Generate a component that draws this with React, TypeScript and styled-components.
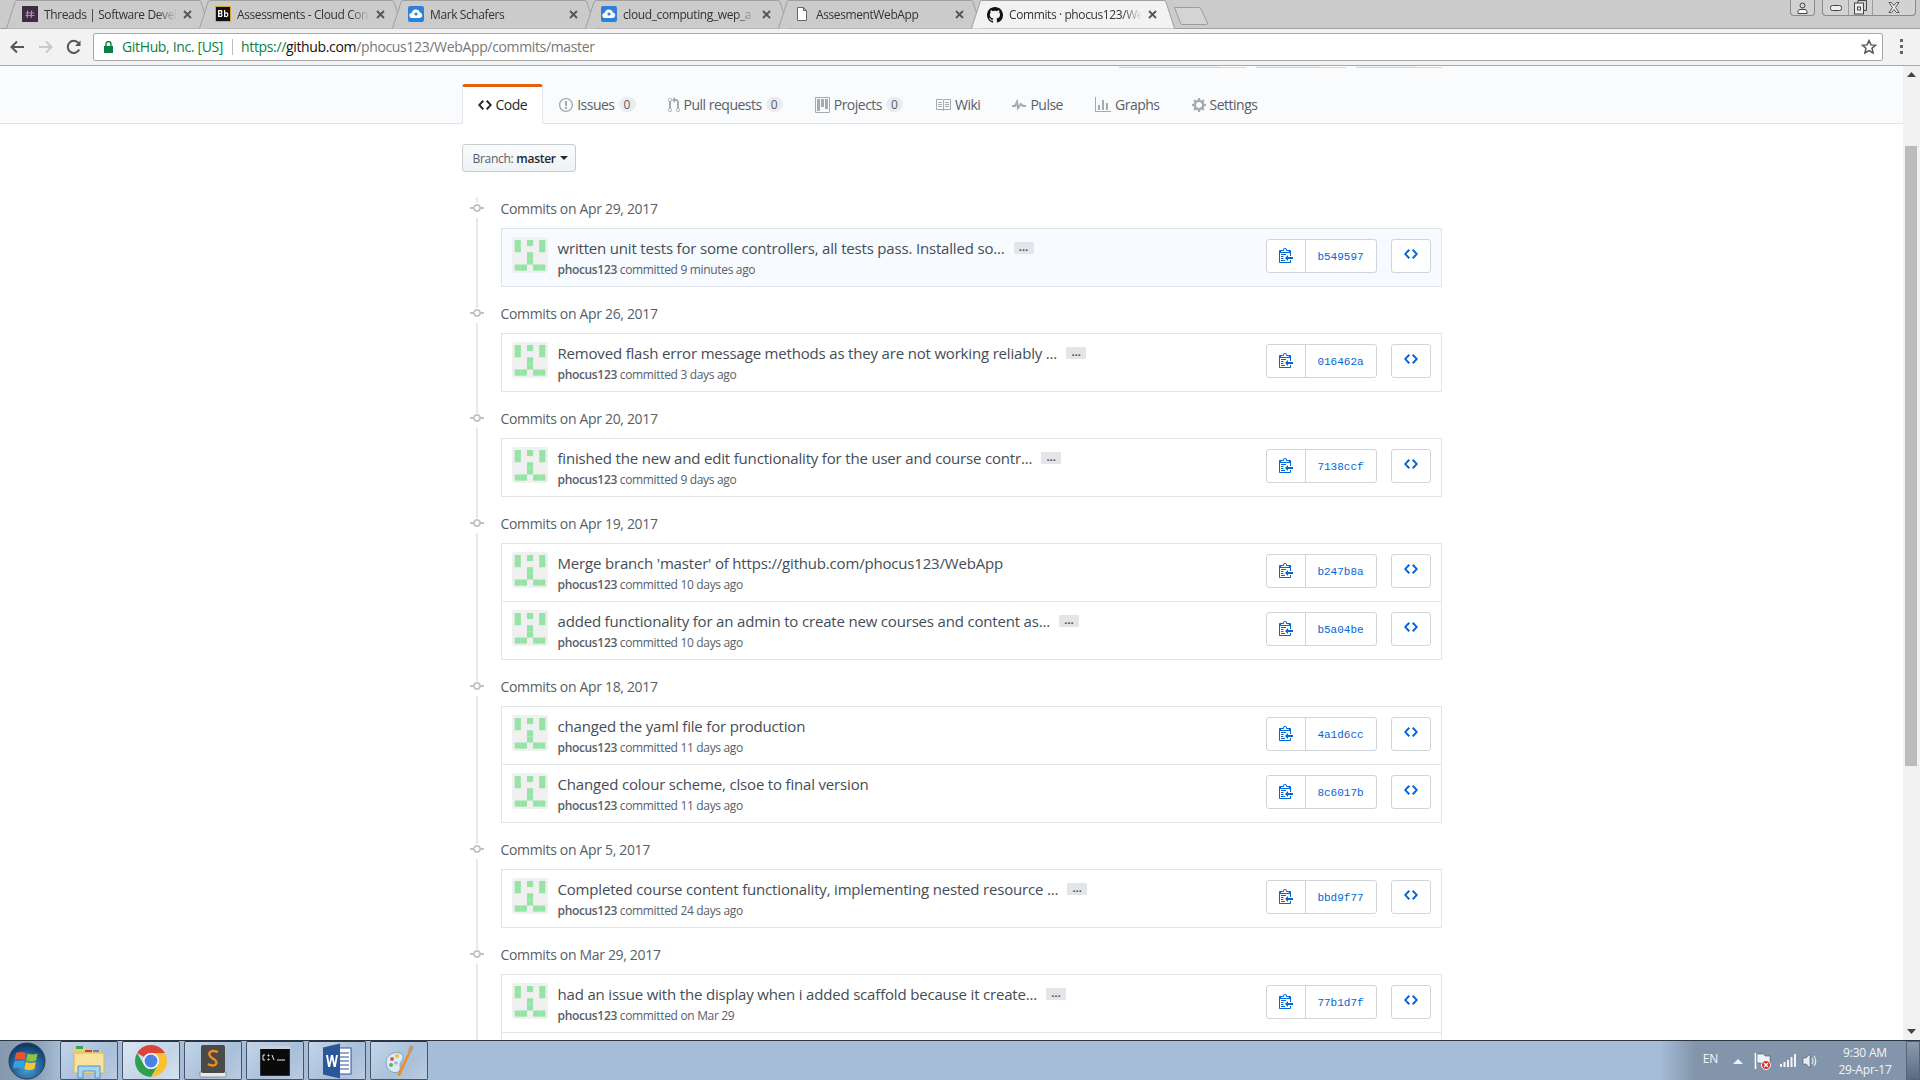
import React from 'react';
import styled, { createGlobalStyle } from 'styled-components';

const FONT = '"Open Sans", "Noto Sans", "Liberation Sans", sans-serif';

const Global = createGlobalStyle`
  html, body { margin: 0; padding: 0; background: #fff; overflow: hidden; }
  * { box-sizing: border-box; }
  body { font-family: ${FONT}; }
`;

const Screen = styled.div`
  width: 1920px; height: 1080px; display: flex; flex-direction: column; overflow: hidden; background: #fff;
`;

/* ---------- Browser chrome ---------- */
const TabStrip = styled.div`
  height: 29px; flex: none; display: flex; align-items: flex-start; padding-left: 6px;
  background: #cbcbcb; border-bottom: 1px solid #a0a0a0; position: relative;
`;
const Tab = styled.div<{ $active?: boolean }>`
  position: relative; width: 204px; height: ${p => (p.$active ? 29 : 28)}px; flex: none; margin-right: -11px;
  display: flex; align-items: center; padding: 0 16px 0 16px; z-index: ${p => (p.$active ? 2 : 1)};
  font-size: 12px; color: #333; letter-spacing: -0.4px;
`;
const TabShape = styled.svg`
  position: absolute; left: 0; top: 0; width: 204px; height: 29px;
`;
const TabIcon = styled.div`
  position: relative; width: 16px; height: 16px; flex: none; display: flex; margin-right: 6px;
`;
const TabTitle = styled.span`
  position: relative; flex: 1; overflow: hidden; white-space: nowrap;
  -webkit-mask-image: linear-gradient(to right, #000 85%, transparent 100%);
  mask-image: linear-gradient(to right, #000 85%, transparent 100%);
`;
const TabClose = styled.svg`
  position: relative; width: 9px; height: 9px; flex: none; margin: 0 2px 0 6px;
`;
const NewTab = styled.svg`
  width: 35px; height: 18px; flex: none; margin: 7px 0 0 10px; position: relative; z-index: 0;
`;
const WinGroup = styled.div`
  position: absolute; top: 0; right: 4px; display: flex; gap: 7px;
`;
const WinBox = styled.div`
  height: 16px; display: flex; border: 1px solid #8a8a8a; border-top: none; border-radius: 0 0 4px 4px; background: #d2d2d2;
`;
const WinBtn = styled.div<{ $w: number }>`
  width: ${p => p.$w}px; display: flex; align-items: center; justify-content: center;
  & + & { border-left: 1px solid #9c9c9c; }
`;

const Toolbar = styled.div`
  height: 37px; flex: none; display: flex; align-items: center; background: #f2f2f2; border-bottom: 1px solid #a8a8a8;
  padding-bottom: 1px;
`;
const NavButton = styled.div<{ $w: number }>`
  width: ${p => p.$w}px; display: flex; justify-content: center; flex: none;
`;
const AddressBar = styled.div`
  width: 1790px; height: 28px; margin-left: 5px; flex: none; display: flex; align-items: center; background: #fff;
  border: 1px solid #a9a9a9; border-radius: 2px; padding: 0 5px 0 10px; font-size: 14px; letter-spacing: -0.35px;
`;
const SiteName = styled.span` color: #0b8043; margin-left: 9px; `;
const Separator = styled.span` width: 1px; height: 16px; background: #bbb; margin: 0 8px 0 9px; `;
const UrlText = styled.span` color: #777; flex: 1; `;
const UrlGreen = styled.span` color: #0b8043; `;
const UrlHost = styled.span` color: #111; `;
const MenuDots = styled.div`
  flex: 1; display: flex; flex-direction: column; align-items: center; gap: 3px;
`;
const Dot = styled.span` width: 3px; height: 3px; background: #666; `;

/* ---------- Page ---------- */
const Viewport = styled.div`
  flex: 1; min-height: 0; display: flex; overflow: hidden;
`;
const Page = styled.div` flex: 1; min-width: 0; overflow: hidden; `;
const Scrollbar = styled.div`
  width: 17px; flex: none; background: #f1f1f1; display: flex; flex-direction: column; align-items: flex-start;
`;
const ScrollArrow = styled.div`
  width: 100%; height: 17px; flex: none; display: flex; align-items: center; justify-content: center;
`;
const ScrollThumb = styled.div`
  width: 12px; height: 620px; margin: 63px 0 0 2px; background: #bcbcbc;
`;
const ScrollSpacer = styled.div` flex: 1; `;

const PageHead = styled.div`
  height: 58px; background: #fafbfc; border-bottom: 1px solid #e1e4e8;
`;
const Container = styled.div`
  width: 980px; margin: 0 auto;
`;
const StubRow = styled.div`
  display: flex; justify-content: flex-end; gap: 10px; height: 2px;
`;
const Stub = styled.div` display: flex; `;
const StubPart = styled.div<{ $w: number; $light?: boolean }>`
  width: ${p => p.$w}px; height: 2px; background: ${p => (p.$light ? '#fff' : '#eff3f6')};
  border-bottom: 1px solid #d1d5da;
`;
const RepoNav = styled.div`
  display: flex; margin-top: 16px; height: 40px; align-items: flex-start;
`;
const NavItem = styled.div<{ $selected?: boolean }>`
  height: 40px; display: flex; align-items: center; padding: 0 15px 1px; font-size: 14px; letter-spacing: -0.5px;
  color: ${p => (p.$selected ? '#24292e' : '#586069')};
  border: 1px solid transparent;
  border-top: 3px solid transparent;
  ${p => p.$selected && `
    background: #fff; border-color: #e1e4e8; border-top-color: #e36209; border-bottom-color: #fff; border-radius: 3px 3px 0 0;
  `}
`;
const NavIcon = styled.svg<{ $selected?: boolean }>`
  height: 16px; flex: none; margin-right: 4px; fill: ${p => (p.$selected ? '#24292e' : '#a3aab1')};
`;
const Counter = styled.span`
  width: 17px; height: 15px; margin-left: 4px; border-radius: 8px; background: #eaecef; color: #586069;
  font-size: 12px; letter-spacing: 0; display: flex; align-items: center; justify-content: center;
`;
const BranchButton = styled.div`
  width: 114px; height: 28px; margin-top: 20px; display: flex; align-items: center; padding-left: 10px;
  border: 1px solid #c9cdd1; border-radius: 3px; background: linear-gradient(#fafbfc, #eff3f6);
  font-size: 12px; letter-spacing: -0.3px; color: #586069;
`;
const BranchName = styled.span` color: #24292e; margin-left: 3px; font-weight: 600; `;
const Caret = styled.span`
  width: 0; height: 0; margin-left: 4px; border: 4px solid transparent; border-top-color: #24292e; border-bottom: 0;
`;
const Listing = styled.div`
  margin: 25px 0 0 14px; border-left: 2px solid #e6e8eb; padding-left: 23px;
`;
const Group = styled.div` margin-bottom: 15px; `;
const GroupTitle = styled.div`
  position: relative; height: 31px; line-height: 23px; font-size: 14px; letter-spacing: -0.33px; color: #586069;
`;
const TitleMark = styled.span`
  position: absolute; left: -32px; top: 6px; width: 16px; height: 15px; background: #fff; display: flex; justify-content: center;
  align-items: flex-start;
`;
const MarkIcon = styled.svg` width: 14px; height: 16px; margin-top: -3px; fill: #bdc2c8; `;
const Box = styled.div`
  width: 941px; border: 1px solid #e1e4e8;
`;
const Row = styled.div<{ $today?: boolean }>`
  display: flex; align-items: flex-start; padding: 8px 10px; background: ${p => (p.$today ? '#f7fbff' : '#fff')};
  box-sizing: content-box; height: 41px;
  & + & { border-top: 1px solid #e1e4e8; }
`;
const Avatar = styled.svg`
  width: 36px; height: 36px; flex: none; border-radius: 3px; background: #f0f0f0; margin-right: 10px;
`;
const RowBody = styled.div` flex: 1; min-width: 0; `;
const TitleLine = styled.div`
  display: flex; align-items: center; height: 24px; margin-top: -1px; font-size: 15px; letter-spacing: -0.18px; color: #444d56;
`;
const Ellipsis = styled.span`
  width: 20px; height: 12px; margin-left: 9px; background: #e3e5e8; border-radius: 1px; color: #444d56;
  font-size: 11px; line-height: 9px; text-align: center; letter-spacing: 0; font-weight: 700;
`;
const Meta = styled.div`
  font-size: 12px; line-height: 16px; margin-top: 2px; letter-spacing: -0.33px; color: #586069;
`;
const Author = styled.span` font-weight: 600; color: #586069; `;
const Actions = styled.div`
  display: flex; gap: 14px; margin-top: 2px; flex: none;
`;
const ButtonGroup = styled.div`
  display: flex; height: 34px; background: #fff; border: 1px solid #d1d5da; border-radius: 3px;
`;
const ClipCell = styled.div`
  width: 39px; display: flex; align-items: center; justify-content: center; border-right: 1px solid #d1d5da; padding-bottom: 3px;
`;
const Sha = styled.div`
  width: 70px; display: flex; align-items: center; justify-content: center; color: #0366d6;
  font: 11px "Liberation Mono", monospace; padding-top: 1px;
`;
const BrowseCell = styled.div`
  width: 38px; display: flex; align-items: center; justify-content: center; padding-bottom: 4px;
`;
const BlueIcon = styled.svg` height: 16px; fill: #0366d6; `;

/* ---------- Taskbar ---------- */
const Taskbar = styled.div`
  height: 40px; flex: none; display: flex; align-items: stretch; border-top: 1px solid #2b3642;
  background: linear-gradient(to right, #8598ae 0, #8ea3bb 40px, #a6bdd7 60px, #a6bdd7 1660px, #8295ab 1695px, #8295ab 100%);
`;
const StartOrb = styled.div`
  width: 60px; flex: none; display: flex; align-items: center; justify-content: center; padding-right: 6px;
`;
const TaskButton = styled.div<{ $active?: boolean }>`
  width: 58px; margin-right: 4px; flex: none; display: flex; align-items: center; justify-content: center;
  border: 1px solid #46566a; border-top-color: #2b3642; border-radius: 2px;
  background: ${p => (p.$active
    ? 'linear-gradient(135deg, #dbe6f2, #c3d3e6 60%, #d6e2ef)'
    : 'linear-gradient(135deg, #c3d4e7, #a9c0da 60%, #b9cce1)')};
`;
const Tray = styled.div`
  margin-left: auto; display: flex; align-items: center; color: #f2f5f8; font-size: 12px;
`;
const Lang = styled.span` margin-right: 15px; padding-bottom: 5px; letter-spacing: -0.2px; `;
const TrayIcon = styled.svg<{ $gap: number }>` flex: none; margin-right: ${p => p.$gap}px; `;
const Clock = styled.div`
  width: 82px; margin-left: 0; text-align: center; line-height: 17px; letter-spacing: -0.2px;
`;
const ShowDesktop = styled.div`
  width: 14px; align-self: stretch; border: 1px solid #55667a;
  background: linear-gradient(#8c9cb0, #5a6b80);
`;

/* ---------- Icons ---------- */
const P = {
  code: 'M9.5 3L8 4.5 11.5 8 8 11.5 9.5 13 14 8 9.5 3zm-5 0L0 8l4.5 5L6 11.5 2.5 8 6 4.5 4.5 3z',
  issue: 'M7 2.3c3.14 0 5.7 2.56 5.7 5.7s-2.56 5.7-5.7 5.7A5.71 5.71 0 0 1 1.3 8c0-3.14 2.56-5.7 5.7-5.7zM7 1C3.14 1 0 4.14 0 8s3.14 7 7 7 7-3.14 7-7-3.14-7-7-7zm1 3H6v5h2V4zm0 6H6v2h2v-2z',
  pr: 'M11 11.28V5c-.03-.78-.34-1.47-.94-2.06C9.46 2.35 8.78 2.03 8 2H7V0L4 3l3 3V4h1c.27.02.48.11.69.31.21.2.3.42.31.69v6.28A1.993 1.993 0 0 0 10 15a1.993 1.993 0 0 0 1-3.72zm-1 2.92c-.66 0-1.2-.55-1.2-1.2 0-.65.55-1.2 1.2-1.2.65 0 1.2.55 1.2 1.2 0 .65-.55 1.2-1.2 1.2zM4 3c0-1.11-.89-2-2-2a1.993 1.993 0 0 0-1 3.72v6.56A1.993 1.993 0 0 0 2 15a1.993 1.993 0 0 0 1-3.72V4.72c.59-.34 1-.98 1-1.72zm-.8 10c0 .66-.55 1.2-1.2 1.2-.65 0-1.2-.55-1.2-1.2 0-.65.55-1.2 1.2-1.2.65 0 1.2.55 1.2 1.2zM2 4.2C1.34 4.2.8 3.65.8 3c0-.65.55-1.2 1.2-1.2.65 0 1.2.55 1.2 1.2 0 .65-.55 1.2-1.2 1.2z',
  project: 'M10 12h3V2h-3v10zm-4-2h3V2H6v8zm-4 4h3V2H2v12zm-1 1h13V1H1v14zM14 0H1a1 1 0 0 0-1 1v14a1 1 0 0 0 1 1h13a1 1 0 0 0 1-1V1a1 1 0 0 0-1-1z',
  book: 'M3 5h4v1H3V5zm0 3h4V7H3v1zm0 2h4V9H3v1zm11-5h-4v1h4V5zm0 2h-4v1h4V7zm0 2h-4v1h4V9zm2-6v9c0 .55-.45 1-1 1H9.5l-1 1-1-1H2c-.55 0-1-.45-1-1V3c0-.55.45-1 1-1h5.5l1 1 1-1H15c.55 0 1 .45 1 1zm-8 .5L7.5 3H2v9h6V3.5zm7-.5H9.5l-.5.5V12h6V3z',
  pulse: 'M11.5 8L8.8 5.4 6.6 8.5 5.5 1.6 2.38 8H0v2h3.6l.9-1.8.9 5.4L9 8.5l1.6 1.5H14V8z',
  graph: 'M16 14v1H0V0h1v14h15zM5 13H3V8h2v5zm4 0H7V3h2v10zm4 0h-2V6h2v7z',
  gear: 'M14 8.77v-1.6l-1.94-.64-.45-1.09.88-1.84-1.13-1.13-1.81.91-1.09-.45-.69-1.92h-1.6l-.63 1.94-1.11.45-1.84-.88-1.13 1.13.91 1.81-.45 1.09L0 7.23v1.59l1.94.64.45 1.09-.88 1.84 1.13 1.13 1.81-.91 1.09.45.69 1.92h1.59l.63-1.94 1.11-.45 1.84.88 1.13-1.13-.92-1.81.47-1.09L14 8.75v.02zM7 11c-1.66 0-3-1.34-3-3s1.34-3 3-3 3 1.34 3 3-1.34 3-3 3z',
  clippy: 'M2 13h4v1H2v-1zm5-6H2v1h5V7zm2 3V8l-3 3 3 3v-2h5v-2H9zM4.5 9H2v1h2.5V9zM2 12h2.5v-1H2v1zm9 1h1v2c-.02.28-.11.52-.3.7-.19.18-.42.28-.7.3H1c-.55 0-1-.45-1-1V4c0-.55.45-1 1-1h3c0-1.11.89-2 2-2 1.11 0 2 .89 2 2h3c.55 0 1 .45 1 1v5h-1V6H1v9h10v-2zM2 5h8c0-.55-.45-1-1-1H8c-.55 0-1-.45-1-1s-.45-1-1-1-1 .45-1 1-.45 1-1 1H3c-.55 0-1 .45-1 1z',
  commit: 'M10.86 7c-.45-1.72-2-3-3.86-3-1.86 0-3.41 1.28-3.86 3H0v2h3.14c.45 1.72 2 3 3.86 3 1.86 0 3.41-1.28 3.86-3H14V7h-3.14zM7 10.2c-1.22 0-2.2-.98-2.2-2.2 0-1.22.98-2.2 2.2-2.2 1.22 0 2.2.98 2.2 2.2 0 1.22-.98 2.2-2.2 2.2z',
  github: 'M8 0C3.58 0 0 3.58 0 8c0 3.54 2.29 6.53 5.47 7.59.4.07.55-.17.55-.38 0-.19-.01-.82-.01-1.49-2.01.37-2.53-.49-2.78-.94-.09-.23-.48-.94-.82-1.13-.28-.15-.68-.52-.01-.53.63-.01 1.08.58 1.23.82.72 1.21 1.87.87 2.33.66.07-.52.28-.87.51-1.07-1.78-.2-3.64-.89-3.64-3.95 0-.87.31-1.59.82-2.15-.08-.2-.36-1.02.08-2.12 0 0 .67-.21 2.2.82.64-.18 1.32-.27 2-.27.68 0 1.36.09 2 .27 1.53-1.04 2.2-.82 2.2-.82.44 1.1.16 1.92.08 2.12.51.56.82 1.27.82 2.15 0 3.07-1.87 3.75-3.65 3.95.29.25.54.73.54 1.48 0 1.07-.01 1.93-.01 2.2 0 .21.15.46.55.38A8.013 8.013 0 0 0 16 8c0-4.42-3.58-8-8-8z',
};

const Identicon = () => {
  const cells = [[0, 0], [0, 1], [2, 0], [4, 0], [4, 1], [2, 2], [2, 3], [0, 4], [1, 4], [3, 4], [4, 4]];
  return (
    <Avatar viewBox="0 0 36 36">
      {cells.map(([c, r]) => (
        <rect key={`${c}-${r}`} x={2.7 + c * 6.13} y={3 + r * 6.13} width={6.13} height={6.13} fill="#95e3a5" />
      ))}
    </Avatar>
  );
};

const CloudFavicon = () => (
  <svg width="16" height="16" viewBox="0 0 16 16">
    <rect width="16" height="16" rx="2" fill="#2f80d8" />
    <path d="M4 12a2.5 2.5 0 0 1-.3-5A4.3 4.3 0 0 1 12 6.5 2.8 2.8 0 0 1 12 12z" fill="#fff" />
    <circle cx="8" cy="8" r="1.6" fill="#2f80d8" />
  </svg>
);
const tabs: { title: string; icon: React.ReactNode; active?: boolean }[] = [
  {
    title: 'Threads | Software Devel',
    icon: <svg width="16" height="16" viewBox="0 0 16 16"><rect width="16" height="16" fill="#3f2a40" /><path d="M5 4.500h1.200L5.800 12H4.600zM9 4.500h1.200L9.800 12H8.600zM3.500 6.500h9v1.100h-9zM3.500 9h9v1.100h-9z" fill="#a893a8" /></svg>,
  },
  {
    title: 'Assessments - Cloud Con',
    icon: <svg width="16" height="16" viewBox="0 0 16 16"><rect x=".5" y=".5" width="15" height="15" fill="#111" stroke="#e0a52c" /><path d="M3 4h3.400c1.400 0 1.400 2.400.3 3.400 1.400.6 1 3.600-.6 3.600H3zm1.400 1.200v1.700h1.200c.7 0 .7-1.700 0-1.700zm0 2.800v1.800h1.400c.8 0 .8-1.800 0-1.800zM9 4h1.200v2.600c1.800-1 3.400.2 3.200 2.200-.2 2.200-2 3-3.200 1.800V11H9zm1.200 4.800c0 1.600 2 1.600 2 0s-2-1.600-2 0z" fill="#fff" /></svg>,
  },
  { title: 'Mark Schafers', icon: <CloudFavicon /> },
  { title: 'cloud_computing_wep_a', icon: <CloudFavicon /> },
  {
    title: 'AssesmentWebApp',
    icon: <svg width="16" height="16" viewBox="0 0 16 16"><path d="M3.500 1.500h6l3 3v10h-9zM9.500 1.500v3h3" fill="#fff" stroke="#666" /></svg>,
  },
  {
    title: 'Commits · phocus123/We',
    active: true,
    icon: <svg width="16" height="16" viewBox="0 0 16 16"><path d={P.github} fill="#111" /></svg>,
  },
];

type Commit = { title: string; sha: string; when: string; more?: boolean };
const groups: { date: string; commits: Commit[]; trailingRow?: boolean }[] = [
  { date: 'Apr 29, 2017', commits: [{ title: 'written unit tests for some controllers, all tests pass. Installed so...', sha: 'b549597', when: '9 minutes ago', more: true }] },
  { date: 'Apr 26, 2017', commits: [{ title: 'Removed flash error message methods as they are not working reliably ...', sha: '016462a', when: '3 days ago', more: true }] },
  { date: 'Apr 20, 2017', commits: [{ title: 'finished the new and edit functionality for the user and course contr...', sha: '7138ccf', when: '9 days ago', more: true }] },
  {
    date: 'Apr 19, 2017',
    commits: [
      { title: "Merge branch 'master' of https://github.com/phocus123/WebApp", sha: 'b247b8a', when: '10 days ago' },
      { title: 'added functionality for an admin to create new courses and content as...', sha: 'b5a04be', when: '10 days ago', more: true },
    ],
  },
  {
    date: 'Apr 18, 2017',
    commits: [
      { title: 'changed the yaml file for production', sha: '4a1d6cc', when: '11 days ago' },
      { title: 'Changed colour scheme, clsoe to final version', sha: '8c6017b', when: '11 days ago' },
    ],
  },
  { date: 'Apr 5, 2017', commits: [{ title: 'Completed course content functionality, implementing nested resource ...', sha: 'bbd9f77', when: '24 days ago', more: true }] },
  {
    date: 'Mar 29, 2017',
    trailingRow: true,
    commits: [
      { title: 'had an issue with the display when i added scaffold because it create...', sha: '77b1d7f', when: 'on Mar 29', more: true },
    ],
  },
];

const navItems = [
  { label: 'Code', d: P.code, w: 14, selected: true },
  { label: 'Issues', d: P.issue, w: 14, count: 0 },
  { label: 'Pull requests', d: P.pr, w: 12, count: 0 },
  { label: 'Projects', d: P.project, w: 15, count: 0 },
  { label: 'Wiki', d: P.book, w: 16 },
  { label: 'Pulse', d: P.pulse, w: 14 },
  { label: 'Graphs', d: P.graph, w: 16 },
  { label: 'Settings', d: P.gear, w: 14 },
];

export default function App() {
  return (
    <Screen>
      <Global />
      <TabStrip>
        {tabs.map(t => (
          <Tab key={t.title} $active={t.active}>
            <TabShape viewBox="0 0 204 29">
              <path d="M0.5 28.5 L9 2 Q9.6 .5 11 .5 L193 .5 Q194.4 .5 195 2 L203.5 28.5" fill={t.active ? '#f2f2f2' : '#cbcbcb'} stroke="#a0a0a0" />
            </TabShape>
            <TabIcon>{t.icon}</TabIcon>
            <TabTitle>{t.title}</TabTitle>
            <TabClose viewBox="0 0 9 9"><path d="M1 1l7 7M8 1l-7 7" stroke="#555" strokeWidth="1.8" /></TabClose>
          </Tab>
        ))}
        <NewTab viewBox="0 0 35 18">
          <path d="M.5.5h25q1 0 1.300 1L33.500 16q.4 1.500-1 1.500H8q-1 0-1.300-1L.5.5z" fill="#d4d4d4" stroke="#9c9c9c" />
        </NewTab>
        <WinGroup>
          <WinBox>
            <WinBtn $w={23}>
              <svg width="11" height="12" viewBox="0 0 11 12"><circle cx="5.5" cy="3.5" r="2.5" fill="none" stroke="#444" /><path d="M1 11.500V9.500q0-1.500 2-2h5q2 .5 2 2v2z" fill="#fff" stroke="#444" /></svg>
            </WinBtn>
          </WinBox>
          <WinBox>
            <WinBtn $w={25}><svg width="12" height="6" viewBox="0 0 12 6"><rect x=".5" y=".5" width="11" height="5" rx="2" fill="#eee" stroke="#444" /></svg></WinBtn>
            <WinBtn $w={24}><svg width="13" height="15" viewBox="0 0 13 15"><path d="M4 3V.5h8.500v10H9.500" fill="none" stroke="#444" /><rect x=".5" y="3" width="9" height="11" fill="#eee" stroke="#444" /><rect x="3.500" y="7" width="3" height="3" fill="none" stroke="#444" /></svg></WinBtn>
            <WinBtn $w={43}><svg width="12" height="11" viewBox="0 0 12 11"><path d="M1 .5h2.500L6 3.500 8.500.5H11L7.500 5.500 11 10.500H8.500L6 7.500 3.500 10.500H1L4.500 5.500z" fill="#eee" stroke="#555" /></svg></WinBtn>
          </WinBox>
        </WinGroup>
      </TabStrip>

      <Toolbar>
        <NavButton $w={33}>
          <svg width="16" height="16" viewBox="0 0 16 16"><path d="M15 8H3M8 2.500L2.500 8 8 13.500" fill="none" stroke="#555" strokeWidth="2" /></svg>
        </NavButton>
        <NavButton $w={26}>
          <svg width="16" height="16" viewBox="0 0 16 16"><path d="M1 8h12M8 2.500L13.500 8 8 13.500" fill="none" stroke="#c9c9c9" strokeWidth="2" /></svg>
        </NavButton>
        <NavButton $w={29}>
          <svg width="16" height="16" viewBox="0 0 16 16"><path d="M13.200 10.500A6 6 0 1 1 12.400 4" fill="none" stroke="#555" strokeWidth="2" /><path d="M14.500 1.500v5.500H9z" fill="#555" /></svg>
        </NavButton>
        <AddressBar>
          <svg width="9" height="12" viewBox="0 0 9 12"><rect y="5" width="9" height="7" fill="#0b8043" /><path d="M2 5.500V3a2.500 2.500 0 0 1 5 0v2.500" fill="none" stroke="#0b8043" strokeWidth="1.4" /></svg>
          <SiteName>GitHub, Inc. [US]</SiteName>
          <Separator />
          <UrlText><UrlGreen>https://</UrlGreen><UrlHost>github.com</UrlHost>/phocus123/WebApp/commits/master</UrlText>
          <svg width="16" height="16" viewBox="0 0 16 16"><path d="M8 1.600l1.900 4.300 4.600.4-3.500 3 1.100 4.600L8 11.500 3.900 13.900 5 9.300l-3.500-3 4.600-.4z" fill="none" stroke="#555" strokeWidth="1.5" /></svg>
        </AddressBar>
        <MenuDots><Dot /><Dot /><Dot /></MenuDots>
      </Toolbar>

      <Viewport>
        <Page>
          <PageHead>
            <Container>
              <StubRow>
                <Stub><StubPart $w={100} /><StubPart $w={27} $light /></Stub>
                <Stub><StubPart $w={62} /><StubPart $w={28} $light /></Stub>
                <Stub><StubPart $w={58} /><StubPart $w={28} $light /></Stub>
              </StubRow>
              <RepoNav>
                {navItems.map(n => (
                  <NavItem key={n.label} $selected={n.selected}>
                    <NavIcon $selected={n.selected} width={n.w} viewBox={`0 0 ${n.w} 16`}><path fillRule="evenodd" d={n.d} /></NavIcon>
                    {n.label}
                    {n.count !== undefined && <Counter>{n.count}</Counter>}
                  </NavItem>
                ))}
              </RepoNav>
            </Container>
          </PageHead>
          <Container>
            <BranchButton>Branch:<BranchName>master</BranchName><Caret /></BranchButton>
            <Listing>
              {groups.map((g, gi) => (
                <Group key={g.date}>
                  <GroupTitle>
                    <TitleMark><MarkIcon viewBox="0 0 14 16"><path d={P.commit} /></MarkIcon></TitleMark>
                    Commits on {g.date}
                  </GroupTitle>
                  <Box>
                    {g.commits.map((c, ci) => (
                      <Row key={c.sha} $today={gi === 0 && ci === 0}>
                        <Identicon />
                        <RowBody>
                          <TitleLine>{c.title}{c.more && <Ellipsis>…</Ellipsis>}</TitleLine>
                          <Meta><Author>phocus123</Author> committed {c.when}</Meta>
                        </RowBody>
                        <Actions>
                          <ButtonGroup>
                            <ClipCell><BlueIcon width="14" viewBox="0 0 14 16"><path d={P.clippy} /></BlueIcon></ClipCell>
                            <Sha>{c.sha}</Sha>
                          </ButtonGroup>
                          <ButtonGroup>
                            <BrowseCell><BlueIcon width="14" viewBox="0 0 14 16"><path d={P.code} /></BlueIcon></BrowseCell>
                          </ButtonGroup>
                        </Actions>
                      </Row>
                    ))}
                    {g.trailingRow && <Row />}
                  </Box>
                </Group>
              ))}
            </Listing>
          </Container>
        </Page>
        <Scrollbar>
          <ScrollArrow><svg width="9" height="5" viewBox="0 0 9 5"><path d="M0 5L4.500 0 9 5z" fill="#444" /></svg></ScrollArrow>
          <ScrollThumb />
          <ScrollSpacer />
          <ScrollArrow><svg width="9" height="5" viewBox="0 0 9 5"><path d="M0 0L4.500 5 9 0z" fill="#444" /></svg></ScrollArrow>
        </Scrollbar>
      </Viewport>

      <Taskbar>
        <StartOrb>
          <svg width="38" height="38" viewBox="0 0 38 38">
            <defs>
              <radialGradient id="orb" cx="50%" cy="70%" r="65%"><stop offset="0" stopColor="#4aa3dd" /><stop offset="1" stopColor="#0e3a66" /></radialGradient>
            </defs>
            <circle cx="19" cy="19" r="18" fill="url(#orb)" stroke="#23405f" />
            <path d="M8 11q5-2 10 0l-1.400 7q-5-2-10 0z" fill="#e8562f" />
            <path d="M19.500 11.500q5 2 10 0l-1.400 7q-5 2-10 0z" fill="#8cc63f" />
            <path d="M6.300 19.500q5-2 10 0l-1.400 7q-5-2-10 0z" fill="#38a0e0" />
            <path d="M17.800 20q5 2 10 0l-1.400 7q-5 2-10 0z" fill="#f7c52c" />
          </svg>
        </StartOrb>
        <TaskButton>
          <svg width="32" height="36" viewBox="0 0 32 36">
            <path d="M1 5h11l2 2h14v4H1z" fill="#e9cf7b" /><rect x="3" y="3" width="7" height="3" fill="#3aa655" /><rect x="12" y="7" width="7" height="2" fill="#c8402f" /><rect x="20" y="7" width="6" height="2" fill="#3f8fdc" />
            <path d="M1 10h30v20H1z" fill="#f7e2a0" stroke="#d9b75c" />
            <path d="M5 23h22v12h-5v-7H10v7H5z" fill="#a8d4ef" stroke="#4f94c8" />
          </svg>
        </TaskButton>
        <TaskButton $active>
          <svg width="32" height="32" viewBox="4 4 40 40">
            <path d="M24 4a20 20 0 0 1 17.300 10H24a10 10 0 0 0-8.700 5L6.700 14A20 20 0 0 1 24 4z" fill="#db4437" />
            <path d="M41.300 14A20 20 0 0 1 24 44l8.700-15a10 10 0 0 0 0-10 10 10 0 0 0-8.700-5z" fill="#fbc02d" />
            <path d="M24 44A20 20 0 0 1 6.700 14l8.600 15a10 10 0 0 0 8.700 5 10 10 0 0 0 8.700-5z" fill="#2e9f4f" />
            <circle cx="24" cy="24" r="10" fill="#f4f4f4" /><circle cx="24" cy="24" r="8" fill="#4a80e8" />
          </svg>
        </TaskButton>
        <TaskButton>
          <svg width="30" height="34" viewBox="0 0 30 34">
            <path d="M2 28h26v4q0 1-1 1H3q-1 0-1-1z" fill="#e8e8e8" stroke="#555" strokeWidth=".5" />
            <rect x="3" y="1" width="24" height="28" rx="2" fill="#4a4a48" />
            <path d="M20 8q-5-2-8 0-2 3 2 6l3 2q3 3 0 5-3 1.500-7-1" fill="none" stroke="#f08a24" strokeWidth="2.4" />
          </svg>
        </TaskButton>
        <TaskButton>
          <svg width="30" height="30" viewBox="0 0 30 30">
            <rect width="30" height="30" fill="#0a0a0a" stroke="#8a97a6" strokeWidth=".5" /><rect width="30" height="3" fill="#c9d1da" />
            <path d="M5 9H3v5h2M8 9h1v1H8zM8 13h1v1H8zM12 9l2 5M17 14h8" fill="none" stroke="#eee" />
          </svg>
        </TaskButton>
        <TaskButton>
          <svg width="30" height="36" viewBox="0 0 30 36">
            <rect x="12" y="5" width="17" height="26" fill="#fff" stroke="#2b579a" />
            <path d="M16 10h11M16 14h11M16 18h11M16 22h11M16 26h11" stroke="#2b579a" strokeWidth="1.2" />
            <path d="M1 4.500l17-4v35l-17-4z" fill="#2b579a" />
            <path d="M4 12h2l1.300 8 1.700-8h2l1.700 8 1.300-8h2l-2.300 12h-2L9.900 16l-1.800 8h-2z" fill="#fff" />
          </svg>
        </TaskButton>
        <TaskButton>
          <svg width="32" height="34" viewBox="0 0 32 34">
            <path d="M3 18C3 11 11 7 17 9c5 2 3 7 1 9s0 5-1 8c-2 5-14 3-14-8z" fill="#dcebf7" stroke="#7ea3c4" />
            <circle cx="9" cy="15" r="2" fill="#e05a4c" /><circle cx="14" cy="12" r="2" fill="#f2c230" /><circle cx="8" cy="21" r="2" fill="#5db85c" /><circle cx="13" cy="19" r="1.800" fill="#9fb9d0" />
            <path d="M14 31L26 7l2 1-11 24z" fill="#ef8d2a" /><path d="M25 7l2-6 4 2-3 6z" fill="#b99a73" />
          </svg>
        </TaskButton>
        <Tray>
          <Lang>EN</Lang>
          <TrayIcon $gap={11} width="10" height="6" viewBox="0 0 10 6"><path d="M0 6l5-5 5 5z" fill="#eef2f6" /></TrayIcon>
          <TrayIcon $gap={8} width="18" height="18" viewBox="0 0 18 18">
            <path d="M1.500 1v16" stroke="#fff" strokeWidth="1.600" /><path d="M3 2h7l1 2h5v7H3z" fill="#eef2f6" stroke="#3c4a5a" strokeWidth=".5" />
            <circle cx="12" cy="13" r="4.500" fill="#d92b2b" stroke="#fff" /><path d="M10 11l4 4M14 11l-4 4" stroke="#fff" strokeWidth="1.300" />
          </TrayIcon>
          <TrayIcon $gap={6} width="16" height="13" viewBox="0 0 16 13">
            <path d="M0 10h2v3H0zM3.500 8h2v5h-2zM7 6h2v7H7zM10.500 3h2v10h-2zM14 0h2v13h-2z" fill="#f2f5f8" />
          </TrayIcon>
          <TrayIcon $gap={6} width="16" height="16" viewBox="0 0 16 16">
            <path d="M1 5h3l4-4v14l-4-4H1z" fill="#e7ecf2" stroke="#3c4a5a" strokeWidth=".5" /><path d="M10 5q2 3 0 6M12 3q3.500 5 0 10" fill="none" stroke="#e7ecf2" strokeWidth="1.200" />
          </TrayIcon>
          <Clock>9:30 AM<br />29-Apr-17</Clock>
          <ShowDesktop />
        </Tray>
      </Taskbar>
    </Screen>
  );
}
